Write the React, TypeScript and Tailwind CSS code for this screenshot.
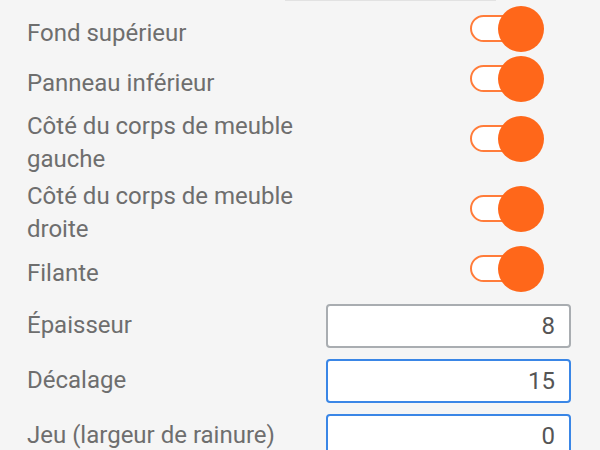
import React, { useState } from 'react'

const toggles = [
  { key: 'fond', label: 'Fond supérieur', double: false },
  { key: 'panneau', label: 'Panneau inférieur', double: false },
  { key: 'gauche', label: 'Côté du corps de meuble gauche', double: true },
  { key: 'droite', label: 'Côté du corps de meuble droite', double: true },
  { key: 'filante', label: 'Filante', double: false },
]

const fields = [
  { key: 'epaisseur', label: 'Épaisseur', focus: false },
  { key: 'decalage', label: 'Décalage', focus: true },
  { key: 'jeu', label: 'Jeu (largeur de rainure)', focus: true },
]

function Switch({ on, onClick }: { on: boolean; onClick: () => void }) {
  return (
    <button onClick={onClick} className="relative w-[60px] h-[27px] shrink-0">
      <span className={`absolute inset-0 rounded-full border-2 ${on ? 'border-[#ff7c3a] bg-white' : 'border-[#bdbdbd] bg-white'}`} />
      <span
        className={`absolute top-1/2 -translate-y-1/2 w-[46px] h-[46px] rounded-full ${on ? 'left-[28px] bg-[#ff671a]' : 'left-[-14px] bg-[#e0e0e0]'}`}
      />
    </button>
  )
}

export default function App() {
  const [on, setOn] = useState<{ [key: string]: boolean }>({
    fond: true, panneau: true, gauche: true, droite: true, filante: true,
  })
  const [vals, setVals] = useState<{ [key: string]: string }>({ epaisseur: '8', decalage: '15', jeu: '0' })

  return (
    <div className="w-[600px] h-[450px] overflow-hidden bg-[#f5f5f5] text-[#6e6e6e] font-['Roboto',sans-serif] text-[24px] leading-[33px]">
      {/* reste du champ précédent */}
      <div className="ml-[285px] w-[211px] h-[1px] bg-[#e2e2e2]" />
      <div className="pt-[7px] pl-[27px] pr-[29px]">
        {toggles.map(t => (
          <div
            key={t.key}
            className={`flex items-center justify-between ${t.double ? 'h-[70px]' : 'h-[50px]'}`}
          >
            <span className={t.double ? 'w-[300px]' : ''}>{t.label}</span>
            <div className="mr-[41px]">
              <Switch on={!!on[t.key]} onClick={() => setOn(p => ({ ...p, [t.key]: !p[t.key] }))} />
            </div>
          </div>
        ))}
        {fields.map(f => (
          <div key={f.key} className="flex items-center justify-between h-[55px]">
            <span>{f.label}</span>
            <input
              value={vals[f.key]}
              onChange={e => setVals(p => ({ ...p, [f.key]: e.target.value }))}
              className={`w-[245px] h-[44px] rounded-[4px] bg-white text-right pr-[14px] text-[#555] outline-none border-2 ${f.focus ? 'border-[#3a86e6]' : 'border-[#a9adb1]'}`}
            />
          </div>
        ))}
      </div>
    </div>
  )
}
